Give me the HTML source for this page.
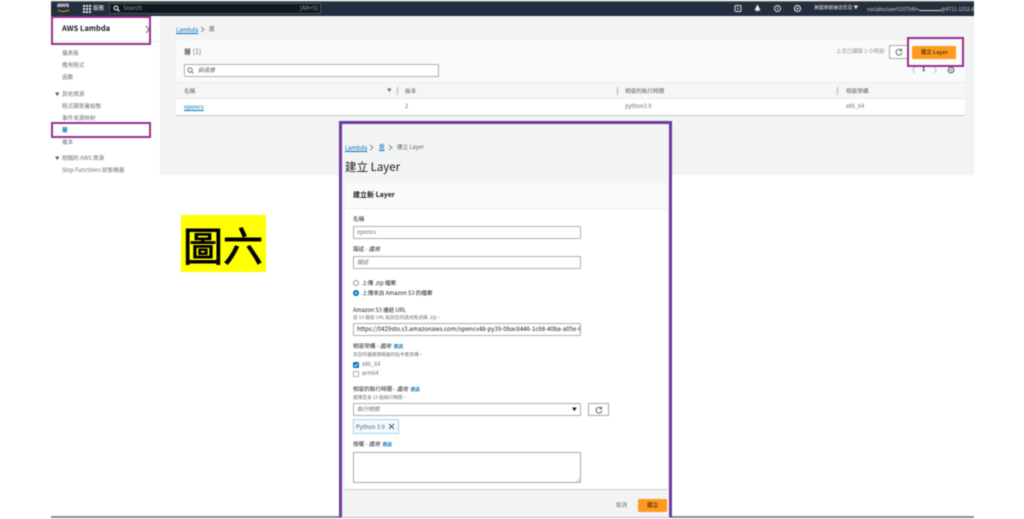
<!DOCTYPE html>
<html lang="zh-TW">
<head>
<meta charset="utf-8">
<title>AWS Lambda 建立 Layer</title>
<style>
html,body{margin:0;padding:0;background:#fff}
body{width:1024px;height:519px;overflow:hidden;position:relative;font-family:"Noto Sans CJK TC","Liberation Sans",sans-serif;color:#545b64}
#w{position:absolute;left:0;top:0;width:1024px;height:519px;filter:blur(.45px)}
.a{position:absolute;white-space:nowrap;line-height:1}
.b{position:absolute;box-sizing:border-box}
.t{font-size:5.6px;color:#687078}
.l{color:#0073bb}
.inp{position:absolute;box-sizing:border-box;background:#fff;border:1px solid #aab0b0;border-radius:1px;height:13px;font-size:5.600px;line-height:11px;padding-left:3px;color:#687078;white-space:nowrap;overflow:hidden}
.pur{position:absolute;box-sizing:border-box;border:2px solid #96308f}
svg{position:absolute;overflow:visible}
</style>
</head>
<body>
<div id="w">
<!-- top nav -->
<div class="b" style="left:51px;top:1px;width:923px;height:15px;background:#232f3e;border-top:1px solid #666"></div>
<div class="a" style="left:57px;top:3px;font-size:6.500px;font-weight:bold;color:#fff;font-family:'Liberation Sans',sans-serif">aws</div>
<svg style="left:57px;top:9px" width="13" height="4"><path d="M1 1q5 3 11 0" fill="none" stroke="#f90" stroke-width="1"/></svg>
<svg style="left:83px;top:5px" width="8" height="8" fill="#eee"><rect x="0" y="0" width="2" height="2"/><rect x="3" y="0" width="2" height="2"/><rect x="6" y="0" width="2" height="2"/><rect x="0" y="3" width="2" height="2"/><rect x="3" y="3" width="2" height="2"/><rect x="6" y="3" width="2" height="2"/><rect x="0" y="6" width="2" height="2"/><rect x="3" y="6" width="2" height="2"/><rect x="6" y="6" width="2" height="2"/></svg>
<div class="a" style="left:93px;top:5.500px;font-size:5.500px;color:#eee">服務</div>
<div class="b" style="left:109px;top:3px;width:212px;height:11px;background:#10171f;border:1px solid #4a5460"></div>
<svg style="left:113px;top:5px" width="7" height="7"><circle cx="3" cy="3" r="2" fill="none" stroke="#fff" stroke-width="1"/><path d="M4.500 4.500L6.500 6.500" stroke="#fff"/></svg>
<div class="a" style="left:123px;top:5px;font-size:6px;color:#8b949c">Search</div>
<div class="a" style="left:300px;top:5px;font-size:5.800px;color:#9aa3ab">[Alt+S]</div>
<svg style="left:734px;top:4px" width="8" height="9"><rect x="1" y="1.500" width="6" height="6" rx="1" fill="none" stroke="#ddd"/><path d="M3 3l1.500 1.500L3 6" fill="none" stroke="#ddd" stroke-width=".7"/></svg>
<svg style="left:753px;top:4px" width="9" height="9"><path d="M4.500 1L7 6H2z M3.500 7h2" fill="#eee" stroke="#eee" stroke-width=".7"/></svg>
<svg style="left:773px;top:4px" width="9" height="9"><circle cx="4.500" cy="4.500" r="3" fill="none" stroke="#ddd"/><path d="M4.500 3v2.500" stroke="#ddd"/></svg>
<svg style="left:793px;top:4px" width="9" height="9"><circle cx="4.500" cy="4.500" r="3" fill="none" stroke="#ddd" stroke-width="1.200"/><circle cx="4.500" cy="4.500" r="1" fill="#ddd"/></svg>
<div class="a" style="left:814px;top:6px;font-size:4.800px;color:#dfe2e4">美國東部維吉尼亞 ▼</div>
<div class="a" style="left:867px;top:6px;font-size:5px;color:#cfd3d6;width:107px;overflow:hidden">voclabs/user5107549=<span style="display:inline-block;width:22px;height:4px;border-bottom:1px solid #cfd3d6"></span>@4711-1252-8</div>

<!-- sidebar -->
<div class="b" style="left:51px;top:16px;width:109px;height:159px;background:#fff"></div>
<div class="b" style="left:160px;top:16px;width:814px;height:159px;background:#f2f3f3"></div>
<div class="b" style="left:51px;top:41px;width:109px;height:1px;background:#eaeded"></div>
<div class="a" style="left:62px;top:25px;font-size:7.500px;font-weight:bold;color:#16191f">AWS Lambda</div>
<svg style="left:145px;top:25px" width="6" height="9"><path d="M1 1l3 3.500L1 8" fill="none" stroke="#687078" stroke-width="1"/></svg>
<div class="a t" style="left:62px;top:51px">儀表板</div>
<div class="a t" style="left:62px;top:63px">應用程式</div>
<div class="a t" style="left:62px;top:74.500px">函數</div>
<div class="a t" style="left:55px;top:92.500px;color:#545b64;font-size:4.500px">▼</div>
<div class="a t" style="left:62px;top:92px">其他資源</div>
<div class="a t" style="left:62px;top:104px">程式碼簽署組態</div>
<div class="a t" style="left:62px;top:116px">事件來源映射</div>
<div class="a" style="left:62px;top:128px;font-size:5.600px;color:#0073bb;font-weight:bold">層</div>
<div class="a t" style="left:62px;top:140px">複本</div>
<div class="a t" style="left:55px;top:156.500px;color:#545b64;font-size:4.500px">▼</div>
<div class="a t" style="left:62px;top:156px">相關的 AWS 資源</div>
<div class="a t" style="left:62px;top:168px">Step Functions 狀態機器</div>

<!-- breadcrumb -->
<div class="a" style="left:176px;top:26.500px;font-size:5.800px;color:#0073bb;text-decoration:underline">Lambda</div>
<svg style="left:200px;top:26px" width="6" height="7"><path d="M1 1l3 2.500L1 6" fill="none" stroke="#687078" stroke-width=".8"/></svg>
<div class="a" style="left:209px;top:26.500px;font-size:5.600px;color:#545b64">層</div>

<!-- table panel -->
<div class="b" style="left:176px;top:40px;width:789px;height:76px;background:#fafafa;border-bottom:1px solid #c8cccc"></div>
<div class="b" style="left:176px;top:98px;width:789px;height:17px;background:#fff"></div>
<div class="b" style="left:176px;top:82px;width:789px;height:17px;background:#f6f6f6;border-top:1px solid #eaeded;border-bottom:1px solid #eaeded"></div>
<div class="a" style="left:184px;top:48.500px;font-size:7px;color:#16191f">層 <span style="color:#687078">(1)</span></div>
<div class="inp" style="left:184px;top:64px;width:255px;height:13px;font-style:italic;padding-left:13px;line-height:11px;font-size:5.600px">篩選層</div>
<svg style="left:187px;top:67px" width="7" height="7"><circle cx="3" cy="3" r="2.200" fill="none" stroke="#545b64" stroke-width=".8"/><path d="M4.700 4.700L6.500 6.500" stroke="#545b64" stroke-width=".8"/></svg>
<div class="a t" style="left:184px;top:88.500px;color:#545b64">名稱</div>
<div class="a" style="left:387px;top:89px;font-size:4.500px;color:#687078">▼</div>
<div class="b" style="left:397px;top:87px;width:1px;height:8px;background:#aab7b8"></div>
<div class="a t" style="left:405px;top:88.500px;color:#545b64">版本</div>
<div class="b" style="left:617px;top:87px;width:1px;height:8px;background:#aab7b8"></div>
<div class="a t" style="left:625px;top:88.500px;color:#545b64">相容的執行時間</div>
<div class="b" style="left:837px;top:87px;width:1px;height:8px;background:#aab7b8"></div>
<div class="a t" style="left:846px;top:88.500px;color:#545b64">相容架構</div>
<div class="a" style="left:184px;top:104px;font-size:5.800px;color:#0073bb;text-decoration:underline">opencv</div>
<div class="a t" style="left:405px;top:104px">2</div>
<div class="a t" style="left:625px;top:104px">python3.9</div>
<div class="a t" style="left:846px;top:104px">x86_64</div>
<div class="a t" style="left:836px;top:49px;color:#879196;font-size:5.400px">上次已擷取 2 小時前</div>
<div class="b" style="left:889px;top:45px;width:19px;height:14px;background:#fff;border:1px solid #a4abab"></div>
<svg style="left:895px;top:48px" width="8" height="8"><path d="M6.500 2.500A3 3 0 1 0 7 4.500M6.500 .8v2H4.500" fill="none" stroke="#545b64" stroke-width=".9"/></svg>
<div class="b" style="left:912px;top:46px;width:44px;height:13px;background:#ff9a1f;border-radius:1px"></div>
<div class="a" style="left:921px;top:50px;font-size:5.400px;font-weight:bold;color:#5a3d12">建立 Layer</div>
<svg style="left:911px;top:66px" width="6" height="8"><path d="M4 1L1.500 4 4 7" fill="none" stroke="#aab7b8" stroke-width=".8"/></svg>
<div class="a" style="left:922px;top:67px;font-size:5.600px;font-weight:bold;color:#16191f">1</div>
<svg style="left:932px;top:66px" width="6" height="8"><path d="M2 1l2.500 3L2 7" fill="none" stroke="#aab7b8" stroke-width=".8"/></svg>
<svg style="left:947px;top:66px" width="8" height="8"><circle cx="4" cy="4" r="2.800" fill="none" stroke="#545b64" stroke-width="1.100"/><circle cx="4" cy="4" r=".9" fill="#545b64"/></svg>

<!-- highlights top -->
<div class="pur" style="left:51px;top:16px;width:100px;height:29px"></div>
<div class="pur" style="left:51px;top:122px;width:100px;height:16px"></div>
<div class="pur" style="left:907px;top:37px;width:57px;height:30px"></div>

<!-- yellow label -->
<div class="b" style="left:181px;top:215px;width:85px;height:57px;background:#ffff00"></div>
<div class="a" style="left:183px;top:222px;font-size:40px;color:#000;font-family:'Noto Sans CJK TC',sans-serif;font-weight:400;-webkit-text-stroke:.9px #000;line-height:45px">圖六</div>

<!-- bottom rule -->
<div class="b" style="left:51px;top:516px;width:923px;height:2px;background:#8d8d8d"></div>

<!-- create panel -->
<div class="b" style="left:339px;top:121px;width:333px;height:397px;background:#f2f3f3;border:3px solid #6f3a9e;border-bottom:1px solid #cbb6dc"></div>
<div class="a" style="left:345px;top:145px;font-size:5.800px;color:#0073bb;text-decoration:underline">Lambda</div>
<svg style="left:369px;top:144px" width="6" height="7"><path d="M1 1l3 2.500L1 6" fill="none" stroke="#687078" stroke-width=".8"/></svg>
<div class="a" style="left:379px;top:145px;font-size:5.600px;color:#0073bb;text-decoration:underline">層</div>
<svg style="left:388px;top:144px" width="6" height="7"><path d="M1 1l3 2.500L1 6" fill="none" stroke="#687078" stroke-width=".8"/></svg>
<div class="a" style="left:397px;top:145px;font-size:5.600px;color:#545b64">建立 Layer</div>
<div class="a" style="left:345px;top:162px;font-size:11.500px;color:#16191f">建立 Layer</div>

<div class="b" style="left:345px;top:183px;width:322px;height:307px;background:#fff;border-bottom:1px solid #c8cccc"></div>
<div class="b" style="left:345px;top:183px;width:322px;height:26px;background:#fafafa;border-bottom:1px solid #eaeded"></div>
<div class="a" style="left:353px;top:191.500px;font-size:7px;font-weight:bold;color:#16191f">建立新 Layer</div>

<div class="a t" style="left:353px;top:216.500px;color:#16191f">名稱</div>
<div class="inp" style="left:353px;top:226px;width:228px">opencv</div>
<div class="a t" style="left:353px;top:246.500px;color:#16191f">描述 - <i>選用</i></div>
<div class="inp" style="left:353px;top:256px;width:228px;font-style:italic">描述</div>

<div class="b" style="left:353px;top:280px;width:6px;height:6px;border:1px solid #879196;border-radius:50%;background:#fff"></div>
<div class="a t" style="left:362px;top:280.500px;color:#16191f">上傳 .zip 檔案</div>
<div class="b" style="left:353px;top:290px;width:6px;height:6px;border:2px solid #0073bb;border-radius:50%;background:#fff"></div>
<div class="a t" style="left:362px;top:290.500px;color:#16191f">上傳來自 Amazon S3 的檔案</div>

<div class="a t" style="left:353px;top:307.500px;color:#16191f">Amazon S3 連結 URL</div>
<div class="a" style="left:353px;top:315.500px;font-size:4.700px;color:#687078">從 S3 連結 URL 貼到您的函式程式碼 .zip。</div>
<div class="inp" style="left:353px;top:323px;width:228px;color:#16191f;font-size:6px;line-height:10px">https://0429sto.s3.amazonaws.com/opencv48-py39-0bac6446-1c68-40ba-a05e-645s</div>

<div class="a t" style="left:353px;top:344px;color:#16191f">相容架構 - <i>選用</i> &nbsp;<b class="l" style="font-size:4.800px">資訊</b></div>
<div class="a" style="left:353px;top:352.500px;font-size:4.700px;color:#687078">為您的層選擇相容的指令集架構。</div>
<div class="b" style="left:353px;top:362px;width:6px;height:6px;background:#0073bb;border-radius:1px"></div>
<svg style="left:353px;top:362px" width="6" height="6"><path d="M1.300 3l1.300 1.400L4.800 1.600" fill="none" stroke="#fff" stroke-width=".9"/></svg>
<div class="a t" style="left:362px;top:362px">x86_64</div>
<div class="b" style="left:353px;top:371px;width:6px;height:6px;border:1px solid #aab7b8;background:#fff"></div>
<div class="a t" style="left:362px;top:371px">arm64</div>

<div class="a t" style="left:353px;top:387px;color:#16191f">相容的執行時間 - <i>選用</i> &nbsp;<b class="l" style="font-size:4.800px">資訊</b></div>
<div class="a" style="left:353px;top:395.500px;font-size:4.700px;color:#687078">選擇至多 15 個執行時間。</div>
<div class="inp" style="left:353px;top:403px;width:228px;font-style:italic">執行時間</div>
<div class="a" style="left:572px;top:408px;font-size:4.800px;color:#16191f">▼</div>
<div class="b" style="left:588px;top:403px;width:21px;height:13px;background:#fff;border:1px solid #a4abab"></div>
<svg style="left:595px;top:405.500px" width="8" height="8"><path d="M6.500 2.500A3 3 0 1 0 7 4.500M6.500 .8v2H4.500" fill="none" stroke="#545b64" stroke-width=".9"/></svg>
<div class="b" style="left:353px;top:419px;width:46px;height:15px;background:#f1faff;border:1px solid #a9d2ea"></div>
<div class="a" style="left:356px;top:423.500px;font-size:5.800px;color:#545b64">Python 3.9</div>
<svg style="left:388px;top:423px" width="7" height="7"><path d="M1 1l5 5M6 1L1 6" stroke="#545b64" stroke-width="1"/></svg>

<div class="a t" style="left:353px;top:442px;color:#16191f">授權 - <i>選用</i> &nbsp;<b class="l" style="font-size:4.800px">資訊</b></div>
<div class="b" style="left:353px;top:452px;width:228px;height:31px;background:#fff;border:1px solid #a4abab"></div>
<svg style="left:576px;top:478px" width="4" height="4"><path d="M0 4L4 0M2 4L4 2" stroke="#879196" stroke-width=".5"/></svg>

<div class="a t" style="left:616px;top:502.500px">取消</div>
<div class="b" style="left:638px;top:499px;width:29px;height:13px;background:#ff9a1f;border-radius:1px"></div>
<div class="a" style="left:647px;top:502.500px;font-size:5.600px;font-weight:bold;color:#5a3d12">建立</div>
</div>
</body>
</html>
